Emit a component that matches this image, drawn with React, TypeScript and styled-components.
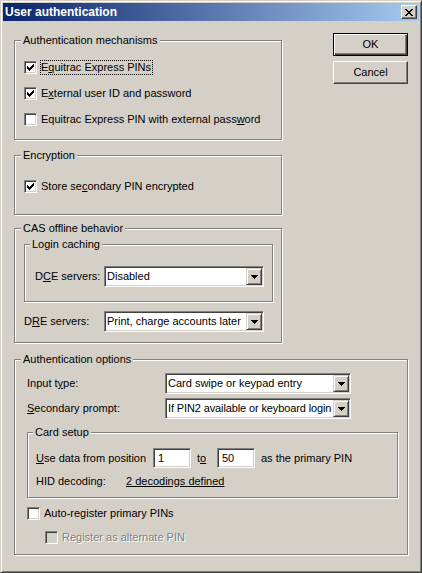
import styled, { createGlobalStyle } from "styled-components";

const GlobalStyle = createGlobalStyle`
  html, body {
    margin: 0;
    padding: 0;
    background: #d4d0c8;
  }
  body {
    font-family: "Liberation Sans", Arial, sans-serif;
    font-size: 11px;
    color: #000;
  }
`;

const Window = styled.div`
  box-sizing: border-box;
  width: 422px;
  height: 573px;
  padding: 2px;
  background: #d4d0c8;
  border: 1px solid;
  border-color: #d4d0c8 #404040 #404040 #d4d0c8;
  box-shadow: inset 1px 1px 0 #fff, inset -1px -1px 0 #808080;
  display: flex;
  flex-direction: column;
`;

const TitleBar = styled.div`
  height: 18px;
  flex-shrink: 0;
  display: flex;
  align-items: center;
  justify-content: space-between;
  padding: 0 2px 0 2px;
  background: linear-gradient(to right, #0a246a, #a6caf0);
`;

const TitleText = styled.span`
  color: #fff;
  font-weight: bold;
  font-size: 12px;
  line-height: 14px;
`;

const CloseButton = styled.div`
  box-sizing: border-box;
  width: 16px;
  height: 14px;
  background: #d4d0c8;
  border: 1px solid;
  border-color: #fff #404040 #404040 #fff;
  box-shadow: inset -1px -1px 0 #808080;
  display: flex;
  align-items: center;
  justify-content: center;
`;

const Body = styled.div`
  flex: 1;
  padding: 12px 11px 0 11px;
  display: flex;
  flex-direction: column;
`;

const TopSection = styled.div`
  display: flex;
  justify-content: space-between;
  align-items: flex-start;
`;

const LeftColumn = styled.div`
  width: 268px;
  padding-top: 1px;
  display: flex;
  flex-direction: column;
`;

const ButtonColumn = styled.div`
  width: 75px;
  display: flex;
  flex-direction: column;
  gap: 5px;
`;

const PushButton = styled.div<{ $default?: boolean }>`
  box-sizing: border-box;
  height: 23px;
  display: flex;
  align-items: center;
  justify-content: center;
  background: #d4d0c8;
  line-height: 13px;
  border: 1px solid;
  border-color: ${(p) => (p.$default ? "#000" : "#fff #404040 #404040 #fff")};
  box-shadow: ${(p) =>
    p.$default
      ? "inset 1px 1px 0 #fff, inset -1px -1px 0 #404040, inset -2px -2px 0 #808080"
      : "inset -1px -1px 0 #808080"};
`;

const Group = styled.fieldset<{ $mt?: number; $pad: string }>`
  margin: ${(p) => p.$mt ?? 0}px 0 0 0;
  padding: ${(p) => p.$pad};
  min-width: 0;
  border: 1px solid #808080;
  box-shadow: 1px 1px 0 #fff, inset 1px 1px 0 #fff;
`;

const Legend = styled.legend<{ $x: number }>`
  margin-left: ${(p) => p.$x}px;
  padding: 0 2px;
  line-height: 13px;
  background: #d4d0c8;
`;

const CheckRow = styled.div<{ $mt?: number; $indent?: number }>`
  display: flex;
  align-items: center;
  gap: 4px;
  height: 13px;
  margin-top: ${(p) => p.$mt ?? 0}px;
  padding-left: ${(p) => p.$indent ?? 0}px;
`;

const CheckBox = styled.span<{ $disabled?: boolean }>`
  box-sizing: border-box;
  width: 13px;
  height: 13px;
  flex-shrink: 0;
  display: flex;
  align-items: center;
  justify-content: center;
  background: ${(p) => (p.$disabled ? "#d4d0c8" : "#fff")};
  border: 1px solid;
  border-color: #808080 #fff #fff #808080;
  box-shadow: inset 1px 1px 0 #404040, inset -1px -1px 0 #d4d0c8;
`;

const CheckLabel = styled.span<{ $focused?: boolean; $disabled?: boolean }>`
  line-height: 13px;
  white-space: nowrap;
  color: ${(p) => (p.$disabled ? "#808080" : "#000")};
  text-shadow: ${(p) => (p.$disabled ? "1px 1px 0 #fff" : "none")};
  border: ${(p) => (p.$focused ? "1px dotted #000" : "none")};
  margin-left: ${(p) => (p.$focused ? -1 : 0)}px;
  padding-right: ${(p) => (p.$focused ? 1 : 0)}px;
`;

const Key = styled.u`
  text-underline-offset: 1px;
`;

const FieldRow = styled.div<{ $mt?: number }>`
  display: flex;
  align-items: center;
  margin-top: ${(p) => p.$mt ?? 0}px;
  line-height: 13px;
  white-space: nowrap;
`;

const FieldLabel = styled.span<{ $w: number }>`
  width: ${(p) => p.$w}px;
  flex-shrink: 0;
`;

const Combo = styled.div<{ $w: number }>`
  box-sizing: border-box;
  width: ${(p) => p.$w}px;
  height: 21px;
  padding: 1px;
  flex-shrink: 0;
  display: flex;
  background: #fff;
  border: 1px solid;
  border-color: #808080 #fff #fff #808080;
  box-shadow: inset 1px 1px 0 #404040, inset -1px -1px 0 #d4d0c8;
`;

const ComboText = styled.span<{ $tight?: boolean }>`
  flex: 1;
  min-width: 0;
  overflow: hidden;
  padding-left: 1px;
  letter-spacing: ${(p) => (p.$tight ? "-0.12px" : "normal")};
  display: flex;
  align-items: center;
`;

const ComboButton = styled.span`
  box-sizing: border-box;
  width: 16px;
  flex-shrink: 0;
  display: flex;
  align-items: center;
  justify-content: center;
  background: #d4d0c8;
  border: 1px solid;
  border-color: #d4d0c8 #404040 #404040 #d4d0c8;
  box-shadow: inset 1px 1px 0 #fff, inset -1px -1px 0 #808080;
`;

const TextBox = styled.div<{ $w: number }>`
  box-sizing: border-box;
  width: ${(p) => p.$w}px;
  height: 20px;
  padding: 0 0 0 4px;
  flex-shrink: 0;
  display: flex;
  align-items: center;
  background: #fff;
  border: 1px solid;
  border-color: #808080 #fff #fff #808080;
  box-shadow: inset 1px 1px 0 #404040, inset -1px -1px 0 #d4d0c8;
`;

const Between = styled.span<{ $w: number }>`
  width: ${(p) => p.$w}px;
  padding-left: 6px;
  box-sizing: border-box;
  flex-shrink: 0;
`;

const LinkText = styled.span`
  text-decoration: underline;
  text-underline-offset: 1px;
`;

function CheckMark() {
  return (
    <svg width="7" height="7" viewBox="0 0 7 7" shapeRendering="crispEdges">
      <path
        d="M0 2h1v3H0zM1 3h1v3H1zM2 4h1v3H2zM3 3h1v3H3zM4 2h1v3H4zM5 1h1v3H5zM6 0h1v3H6z"
        fill="#000"
      />
    </svg>
  );
}

function CloseGlyph() {
  return (
    <svg width="8" height="7" viewBox="0 0 8 7" shapeRendering="crispEdges">
      <path
        d="M0 0h2v1H0zM6 0h2v1H6zM1 1h2v1H1zM5 1h2v1H5zM2 2h4v1H2zM3 3h2v1H3zM2 4h4v1H2zM1 5h2v1H1zM5 5h2v1H5zM0 6h2v1H0zM6 6h2v1H6z"
        fill="#000"
      />
    </svg>
  );
}

function Arrow() {
  return (
    <svg width="7" height="4" viewBox="0 0 7 4" shapeRendering="crispEdges">
      <path d="M0 0h7v1H0zM1 1h5v1H1zM2 2h3v1H2zM3 3h1v1H3z" fill="#000" />
    </svg>
  );
}

function Select({
  width,
  value,
  tight,
}: {
  width: number;
  value: string;
  tight?: boolean;
}) {
  return (
    <Combo $w={width}>
      <ComboText $tight={tight}>{value}</ComboText>
      <ComboButton>
        <Arrow />
      </ComboButton>
    </Combo>
  );
}

export default function App() {
  return (
    <>
      <GlobalStyle />
      <Window>
        <TitleBar>
          <TitleText>User authentication</TitleText>
          <CloseButton>
            <CloseGlyph />
          </CloseButton>
        </TitleBar>
        <Body>
          <TopSection>
            <LeftColumn>
              <Group $pad="14px 9px 13px 9px">
                <Legend $x={-3}>Authentication mechanisms</Legend>
                <CheckRow>
                  <CheckBox>
                    <CheckMark />
                  </CheckBox>
                  <CheckLabel $focused>
                    E<Key>q</Key>uitrac Express PINs
                  </CheckLabel>
                </CheckRow>
                <CheckRow $mt={13}>
                  <CheckBox>
                    <CheckMark />
                  </CheckBox>
                  <CheckLabel>
                    E<Key>x</Key>ternal user ID and password
                  </CheckLabel>
                </CheckRow>
                <CheckRow $mt={13}>
                  <CheckBox />
                  <CheckLabel>
                    Equitrac Express PIN with external pass<Key>w</Key>ord
                  </CheckLabel>
                </CheckRow>
              </Group>

              <Group $mt={9} $pad="18px 9px 21px 9px">
                <Legend $x={-3}>Encryption</Legend>
                <CheckRow>
                  <CheckBox>
                    <CheckMark />
                  </CheckBox>
                  <CheckLabel>
                    Store se<Key>c</Key>ondary PIN encrypted
                  </CheckLabel>
                </CheckRow>
              </Group>

              <Group $mt={7} $pad="3px 8px 10px 9px">
                <Legend $x={-3}>CAS offline behavior</Legend>
                <Group $pad="15px 8px 14px 10px">
                  <Legend $x={-5}>Login caching</Legend>
                  <FieldRow>
                    <FieldLabel $w={69}>
                      D<Key>C</Key>E servers:
                    </FieldLabel>
                    <Select width={160} value="Disabled" />
                  </FieldRow>
                </Group>
                <FieldRow $mt={9}>
                  <FieldLabel $w={80}>
                    D<Key>R</Key>E servers:
                  </FieldLabel>
                  <Select width={160} value="Print, charge accounts later" />
                </FieldRow>
              </Group>
            </LeftColumn>

            <ButtonColumn>
              <PushButton $default>OK</PushButton>
              <PushButton>Cancel</PushButton>
            </ButtonColumn>
          </TopSection>

          <Group $mt={10} $pad="7px 9px 10px 12px">
            <Legend $x={-6}>Authentication options</Legend>
            <FieldRow>
              <FieldLabel $w={138}>
                Input t<Key>y</Key>pe:
              </FieldLabel>
              <Select width={186} value="Card swipe or keypad entry" />
            </FieldRow>
            <FieldRow $mt={4}>
              <FieldLabel $w={138}>
                <Key>S</Key>econdary prompt:
              </FieldLabel>
              <Select
                width={186}
                value="If PIN2 available or keyboard login"
                tight
              />
            </FieldRow>

            <Group $mt={7} $pad="9px 8px 9px 8px">
              <Legend $x={-3}>Card setup</Legend>
              <FieldRow>
                <FieldLabel $w={117}>
                  <Key>U</Key>se data from position
                </FieldLabel>
                <TextBox $w={38}>1</TextBox>
                <Between $w={26}>
                  t<Key>o</Key>
                </Between>
                <TextBox $w={38}>50</TextBox>
                <Between $w={110}>as the primary PIN</Between>
              </FieldRow>
              <FieldRow $mt={7}>
                <FieldLabel $w={90}>HID decoding:</FieldLabel>
                <LinkText>2 decodings defined</LinkText>
              </FieldRow>
            </Group>

            <CheckRow $mt={9}>
              <CheckBox />
              <CheckLabel>Auto-register primary PINs</CheckLabel>
            </CheckRow>
            <CheckRow $mt={11} $indent={18}>
              <CheckBox $disabled />
              <CheckLabel $disabled>Register as alternate PIN</CheckLabel>
            </CheckRow>
          </Group>
        </Body>
      </Window>
    </>
  );
}
